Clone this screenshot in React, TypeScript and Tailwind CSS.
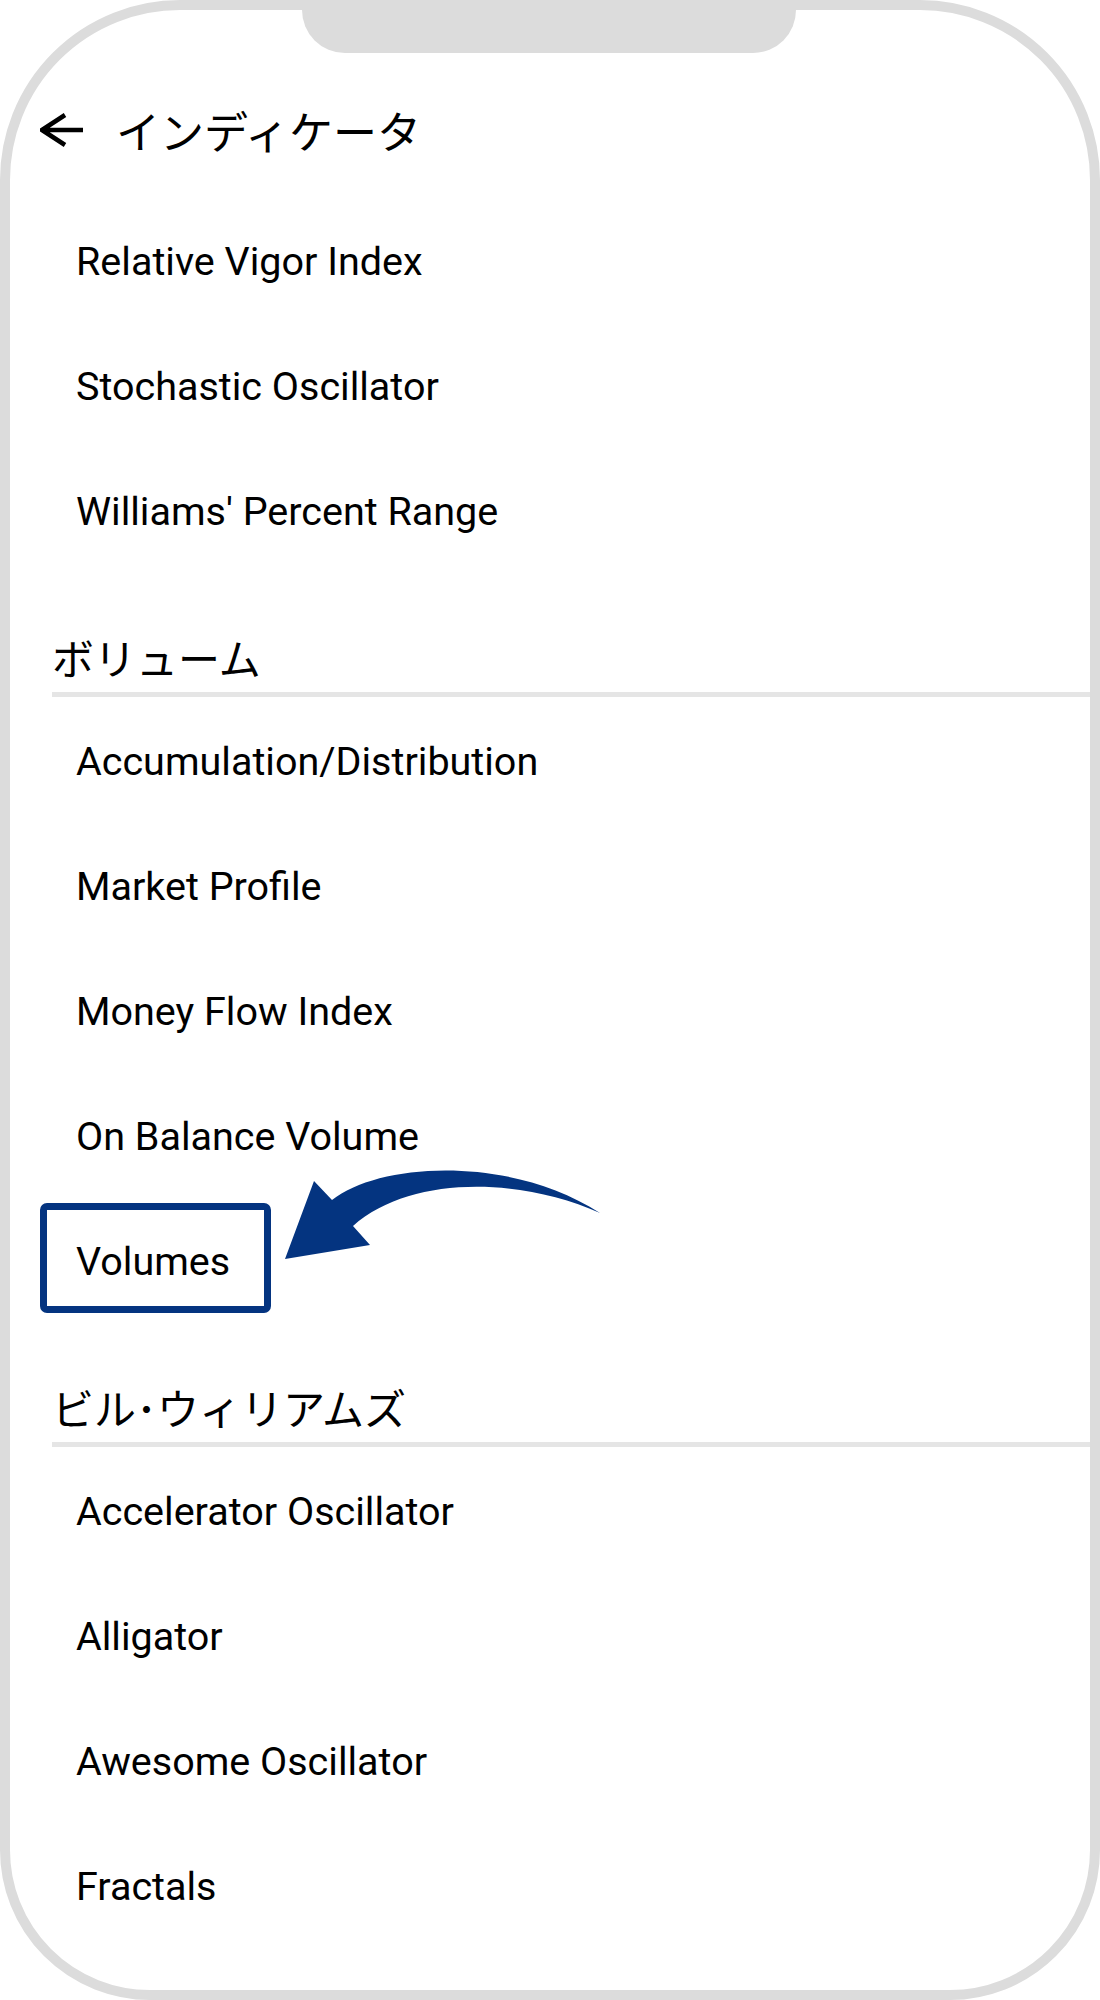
import React from "react";

const FONT = "font-['Roboto','Noto_Sans_CJK_JP',sans-serif]";

function Item({ label }: { label: string }) {
  return (
    <div className="h-[125px] flex items-center pl-[66px] text-[39.5px] leading-[48px] text-black">
      {label}
    </div>
  );
}

function Section({ label }: { label: string }) {
  return (
    <div className="h-[123px] mb-[2px] ml-[42px] pt-[63px] border-b-[5px] border-[#e5e5e5]">
      <div className="text-[42px] leading-[48px] text-black">{label}</div>
    </div>
  );
}

export default function App() {
  return (
    <div className={`w-[1100px] h-[2000px] bg-white ${FONT}`}>
      <div className="relative w-[1100px] h-[2000px] border-[10px] border-[#dcdcdc] rounded-t-[180px] rounded-b-[150px] bg-white">
        {/* notch */}
        <div className="absolute top-0 left-[292px] w-[494px] h-[43px] rounded-b-[45px] bg-[#dcdcdc]" />

        {/* header */}
        <div className="pt-[60px]">
          <div className="h-[120px] flex items-center pl-[30px]">
            <svg width="48" height="40" viewBox="0 0 48 40" className="shrink-0">
              <path
                d="M2 20 H43 M25 5 L2 20 L25 35"
                fill="none"
                stroke="#000"
                strokeWidth="4.5"
                strokeLinejoin="miter"
              />
            </svg>
            <div className="ml-[28px] mt-[8px] text-[44px] leading-[48px] text-black">インディケータ</div>
          </div>
        </div>

        {/* list */}
        <div className="mt-[9px]">
          <Item label="Relative Vigor Index" />
          <Item label="Stochastic Oscillator" />
          <Item label="Williams' Percent Range" />
          <Section label="ボリューム" />
          <Item label="Accumulation/Distribution" />
          <Item label="Market Profile" />
          <Item label="Money Flow Index" />
          <Item label="On Balance Volume" />
          <div className="relative">
            <Item label="Volumes" />
            <div className="absolute left-[30px] top-[4px] w-[231px] h-[110px] border-[7px] border-[#043480] rounded-[7px]" />
            <svg
              className="absolute left-[270px] top-[-39px] w-[330px] h-[110px]"
              viewBox="0 0 330 110"
            >
              <path
                d="M5 99 L34 21 L52 40 C100 2 230 -5 320 53 C240 17 130 15 73 66 L90 85 Z"
                fill="#043480"
              />
            </svg>
          </div>
          <Section label="ビル･ウィリアムズ" />
          <Item label="Accelerator Oscillator" />
          <Item label="Alligator" />
          <Item label="Awesome Oscillator" />
          <Item label="Fractals" />
        </div>
      </div>
    </div>
  );
}
